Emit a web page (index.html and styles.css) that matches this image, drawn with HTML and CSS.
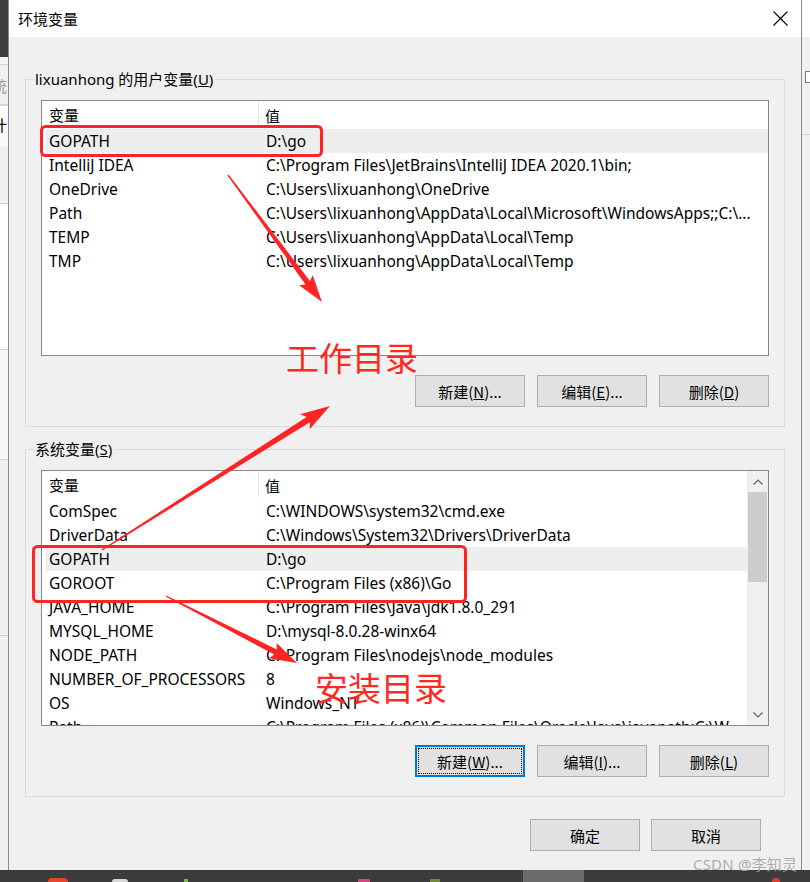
FILE: index.html
```html
<!DOCTYPE html>
<html lang="zh-CN">
<head>
<meta charset="utf-8">
<title>环境变量</title>
<link rel="stylesheet" href="styles.css">
</head>
<body>
<div class="screen">
  <div class="stage">
    <div class="strip strip-left">
      <div class="sl-dark"></div>
      <div class="sl-band sl-light"></div>
      <div class="sl-band sl-frag"><span class="frag frag-grey">统</span></div>
      <div class="sl-band sl-frag2"><span class="frag">计</span></div>
      <div class="sl-band sl-white"></div>
      <div class="sl-band sl-grey1"></div>
      <div class="sl-band sl-grey2"></div>
      <div class="sl-band sl-grey3"></div>
      <div class="sl-band sl-rest"></div>
    </div>

    <div class="dialog">
      <div class="titlebar">
        <span class="title">环境变量</span>
        <svg class="close" width="15" height="15" viewBox="0 0 15 15"><path d="M0.5 0.5L14.5 14.5M14.5 0.5L0.5 14.5"/></svg>
      </div>

      <div class="dlg-body">
        <fieldset class="group">
          <legend>lixuanhong 的用户变量(<u>U</u>)</legend>
          <div class="list">
            <div class="list-main">
              <div class="lv-head"><span class="c1">变量</span><span class="c2">值</span></div>
              <div class="row sel"><span class="c1">GOPATH</span><span class="c2">D:\go</span></div>
              <div class="row"><span class="c1">IntelliJ IDEA</span><span class="c2">C:\Program Files\JetBrains\IntelliJ IDEA 2020.1\bin;</span></div>
              <div class="row"><span class="c1">OneDrive</span><span class="c2">C:\Users\lixuanhong\OneDrive</span></div>
              <div class="row"><span class="c1">Path</span><span class="c2">C:\Users\lixuanhong\AppData\Local\Microsoft\WindowsApps;;C:\...</span></div>
              <div class="row"><span class="c1">TEMP</span><span class="c2">C:\Users\lixuanhong\AppData\Local\Temp</span></div>
              <div class="row"><span class="c1">TMP</span><span class="c2">C:\Users\lixuanhong\AppData\Local\Temp</span></div>
            </div>
          </div>
          <div class="btns">
            <button class="btn">新建(<u>N</u>)...</button>
            <button class="btn">编辑(<u>E</u>)...</button>
            <button class="btn">删除(<u>D</u>)</button>
          </div>
        </fieldset>

        <fieldset class="group group-sys">
          <legend>系统变量(<u>S</u>)</legend>
          <div class="list">
            <div class="list-main">
              <div class="lv-head"><span class="c1">变量</span><span class="c2">值</span></div>
              <div class="row"><span class="c1">ComSpec</span><span class="c2">C:\WINDOWS\system32\cmd.exe</span></div>
              <div class="row"><span class="c1">DriverData</span><span class="c2">C:\Windows\System32\Drivers\DriverData</span></div>
              <div class="row sel"><span class="c1">GOPATH</span><span class="c2">D:\go</span></div>
              <div class="row"><span class="c1">GOROOT</span><span class="c2">C:\Program Files (x86)\Go</span></div>
              <div class="row"><span class="c1">JAVA_HOME</span><span class="c2">C:\Program Files\Java\jdk1.8.0_291</span></div>
              <div class="row"><span class="c1">MYSQL_HOME</span><span class="c2">D:\mysql-8.0.28-winx64</span></div>
              <div class="row"><span class="c1">NODE_PATH</span><span class="c2">C:\Program Files\nodejs\node_modules</span></div>
              <div class="row"><span class="c1">NUMBER_OF_PROCESSORS</span><span class="c2">8</span></div>
              <div class="row"><span class="c1">OS</span><span class="c2">Windows_NT</span></div>
              <div class="row"><span class="c1">Path</span><span class="c2">C:\Program Files (x86)\Common Files\Oracle\Java\javapath;C:\W...</span></div>
            </div>
            <div class="vscroll">
              <div class="sb-btn"><svg width="10" height="6" viewBox="0 0 10 6"><path d="M0.5 5.5L5 1L9.5 5.5"/></svg></div>
              <div class="sb-thumb"></div>
              <div class="sb-track"></div>
              <div class="sb-btn"><svg width="10" height="6" viewBox="0 0 10 6"><path d="M0.5 0.5L5 5L9.5 0.5"/></svg></div>
            </div>
          </div>
          <div class="btns">
            <button class="btn focus">新建(<u>W</u>)...</button>
            <button class="btn">编辑(<u>I</u>)...</button>
            <button class="btn">删除(<u>L</u>)</button>
          </div>
        </fieldset>

        <div class="okrow">
          <button class="btn">确定</button>
          <button class="btn">取消</button>
        </div>
      </div>
    </div>

    <div class="strip strip-right">
      <div class="sr-top"></div>
      <div class="sr-box"></div>
      <div class="sr-mid"></div>
      <div class="sr-rest"></div>
    </div>
  </div>

  <div class="taskbar">
    <span class="tb-icon tb-red"></span>
    <span class="tb-icon tb-round"></span>
    <span class="tb-icon tb-green"></span>
    <span class="tb-icon tb-pink"></span>
    <span class="tb-icon tb-olive"></span>
    <span class="tb-active"></span>
    <span class="tb-icon tb-red2"></span>
  </div>
</div>

<svg class="annot" width="810" height="882" viewBox="0 0 810 882">
  <rect x="41.5" y="126.5" width="280" height="29" rx="4" class="box"/>
  <rect x="33.5" y="546.5" width="432" height="55" rx="4" class="box"/>
  <g transform="translate(228 175) rotate(53.5)">
    <polygon class="arrow" points="0,-0.7 134,-2.8 131,-8.5 158,0 131,8.5 134,2.8 0,0.7"/>
  </g>
  <g transform="translate(102 550) rotate(-32.3)">
    <polygon class="arrow" points="0,-0.7 244,-3 240,-9 269.7,0 240,9 244,3 0,0.7"/>
  </g>
  <g transform="translate(166 596) rotate(27.1)">
    <polygon class="arrow" points="0,-0.7 123,-2.8 120,-8.5 147,0 120,8.5 123,2.8 0,0.7"/>
  </g>
</svg>
<div class="note note-work">工作目录</div>
<div class="note note-install">安装目录</div>
<div class="watermark">CSDN @李知灵</div>
</body>
</html>
```

FILE: styles.css
```css
* { box-sizing: border-box; }
html, body { margin: 0; padding: 0; }
body {
  width: 810px;
  height: 882px;
  overflow: hidden;
  position: relative;
  background: #f0f0f0;
  color: #000;
  font-family: "Noto Sans", "Noto Sans CJK SC", sans-serif;
}
.screen { display: flex; flex-direction: column; height: 882px; }
.stage { display: flex; height: 870px; }

/* background window fragments */
.strip { width: 8px; display: flex; flex-direction: column; overflow: hidden; flex: none; }
.sl-dark { height: 57px; background: #3d3d3d; }
.sl-light { height: 8px; background: #f4f4f4; border-bottom: 1px solid #d4d4d4; }
.sl-frag { height: 41px; background: #f0f0f0; border-bottom: 2px solid #d9d9d9; overflow: hidden; }
.sl-frag2 { height: 40px; background: #fafafa; overflow: hidden; }
.frag { display: block; margin-left: -8px; font-family: "Noto Sans CJK SC", sans-serif; font-size: 15px; line-height: 22px; padding-top: 8px; }
.frag-grey { color: #9a9a9a; padding-top: 10px; }
.sl-white { height: 58px; background: #f0f0f0; border-bottom: 1px solid #cfcfcf; }
.sl-grey1 { height: 146px; background: #ffffff; border-bottom: 1px solid #cfcfcf; }
.sl-grey2 { height: 110px; background: #f7f7f7; border-bottom: 1px solid #cfcfcf; }
.sl-grey3 { height: 176px; background: #f0f0f0; border-bottom: 1px solid #cfcfcf; }
.sl-rest { flex: 1; background: #f0f0f0; }

.strip-right { background: #f0f0f0; }
.sr-top { height: 37px; background: #ffffff; }
.sr-box { height: 12px; margin-top: 34px; margin-left: 3px; border: 1px solid #7a7a7a; border-right: 0; background: #fff; }
.sr-mid { height: 52px; border-bottom: 1px solid #d0d0d0; }
.sr-rest { flex: 1; }

/* dialog */
.dialog {
  width: 794px;
  flex: none;
  display: flex;
  flex-direction: column;
  background: #f0f0f0;
  border-left: 1px solid #8c8c8c;
  border-right: 1px solid #8c8c8c;
}
.titlebar {
  height: 37px;
  flex: none;
  background: #fff;
  display: flex;
  align-items: center;
  justify-content: space-between;
  padding: 0 13px 0 9px;
}
.title { font-size: 15px; font-family: "Noto Sans CJK SC", sans-serif; }
.close path { stroke: #000; stroke-width: 1.1; fill: none; }

.dlg-body { padding: 32px 16px 0; }

.group {
  margin: 0;
  border: 1px solid #dcdcdc;
  padding: 11px 15px 19px;
  min-width: 0;
}
.group-sys { margin-top: 12px; }
.group legend {
  padding: 0 2px;
  margin-left: -8px;
  font-size: 15px;
  line-height: 20px;
  height: 20px;
}

.list {
  height: 256px;
  border: 1px solid #828790;
  background: #fff;
  display: flex;
  overflow: hidden;
}
.list-main { flex: 1; padding-left: 4px; overflow: hidden; min-width: 0; }
.lv-head { height: 28px; display: flex; font-size: 15px; }
.lv-head .c1 {
  width: 213px;
  padding-left: 3px;
  display: flex;
  align-items: center;
  border-right: 1px solid #e5e5e5;
  margin: 1px 0 2px;
}
.lv-head .c2 { padding-left: 6px; display: flex; align-items: center; }
.row {
  height: 24px;
  display: flex;
  align-items: center;
  font-size: 15.5px;
  white-space: nowrap;
}
.row .c1 { width: 217px; flex: none; padding-left: 3px; }
.row .c2 { padding-left: 3px; }
.row.sel { background: #eeeeee; }

.vscroll { width: 21px; flex: none; background: #f0f0f0; display: flex; flex-direction: column; }
.sb-btn { height: 21px; display: flex; align-items: center; justify-content: center; flex: none; }
.sb-btn path { stroke: #606060; stroke-width: 1.2; fill: none; }
.sb-thumb { height: 90px; margin: 0 1px; background: #cdcdcd; flex: none; }
.sb-track { flex: 1; }

.btns { display: flex; justify-content: flex-end; gap: 12px; margin-top: 19px; }
.btn {
  width: 110px;
  height: 32px;
  padding: 0;
  background: #e1e1e1;
  border: 1px solid #adadad;
  color: #000;
  font-family: "Noto Sans CJK SC", sans-serif;
  font-size: 15px;
  line-height: 1;
}
.btn.focus { border: 2px solid #0078d7; outline: 1px dotted #000; outline-offset: -4px; }
.okrow { display: flex; justify-content: flex-end; gap: 11px; margin-top: 22px; padding-right: 24px; }

/* taskbar */
.taskbar { height: 12px; background: #3b3b3b; display: flex; align-items: flex-end; }
.tb-icon { display: block; flex: none; }
.tb-red { width: 20px; height: 4px; margin-left: 48px; background: #e5452f; border-radius: 8px 8px 0 0; }
.tb-round { width: 16px; height: 3px; margin-left: 44px; background: #d8d8d8; border-radius: 8px 8px 0 0; }
.tb-green { width: 4px; height: 3px; margin-left: 56px; background: #7ab648; }
.tb-pink { width: 12px; height: 3px; margin-left: 170px; background: #d9437f; }
.tb-olive { width: 10px; height: 3px; margin-left: 60px; background: #6e8c3c; }
.tb-active { width: 61px; height: 12px; margin-left: 83px; background: #6b6b6b; }
.tb-red2 { width: 8px; height: 4px; margin-left: 188px; background: #e23b2b; border-radius: 4px 4px 0 0; }

/* annotations drawn over the screenshot */
.annot { position: absolute; left: 0; top: 0; pointer-events: none; }
.annot .box { fill: none; stroke: #ff2424; stroke-width: 3; }
.annot .arrow { fill: #ff2424; }
.note {
  position: absolute;
  font-family: "Noto Sans CJK SC", sans-serif;
  font-size: 33px;
  line-height: 33px;
  color: #ff2a1f;
  white-space: nowrap;
}
.note-work { left: 286px; top: 341px; }
.note-install { left: 315px; top: 671px; }
.watermark {
  position: absolute;
  left: 693px;
  top: 855px;
  font-family: "Noto Sans", "Noto Sans CJK SC", sans-serif;
  font-size: 15px;
  line-height: 18px;
  letter-spacing: 0.2px;
  color: rgba(160, 160, 160, 0.85);
  white-space: nowrap;
}
```
